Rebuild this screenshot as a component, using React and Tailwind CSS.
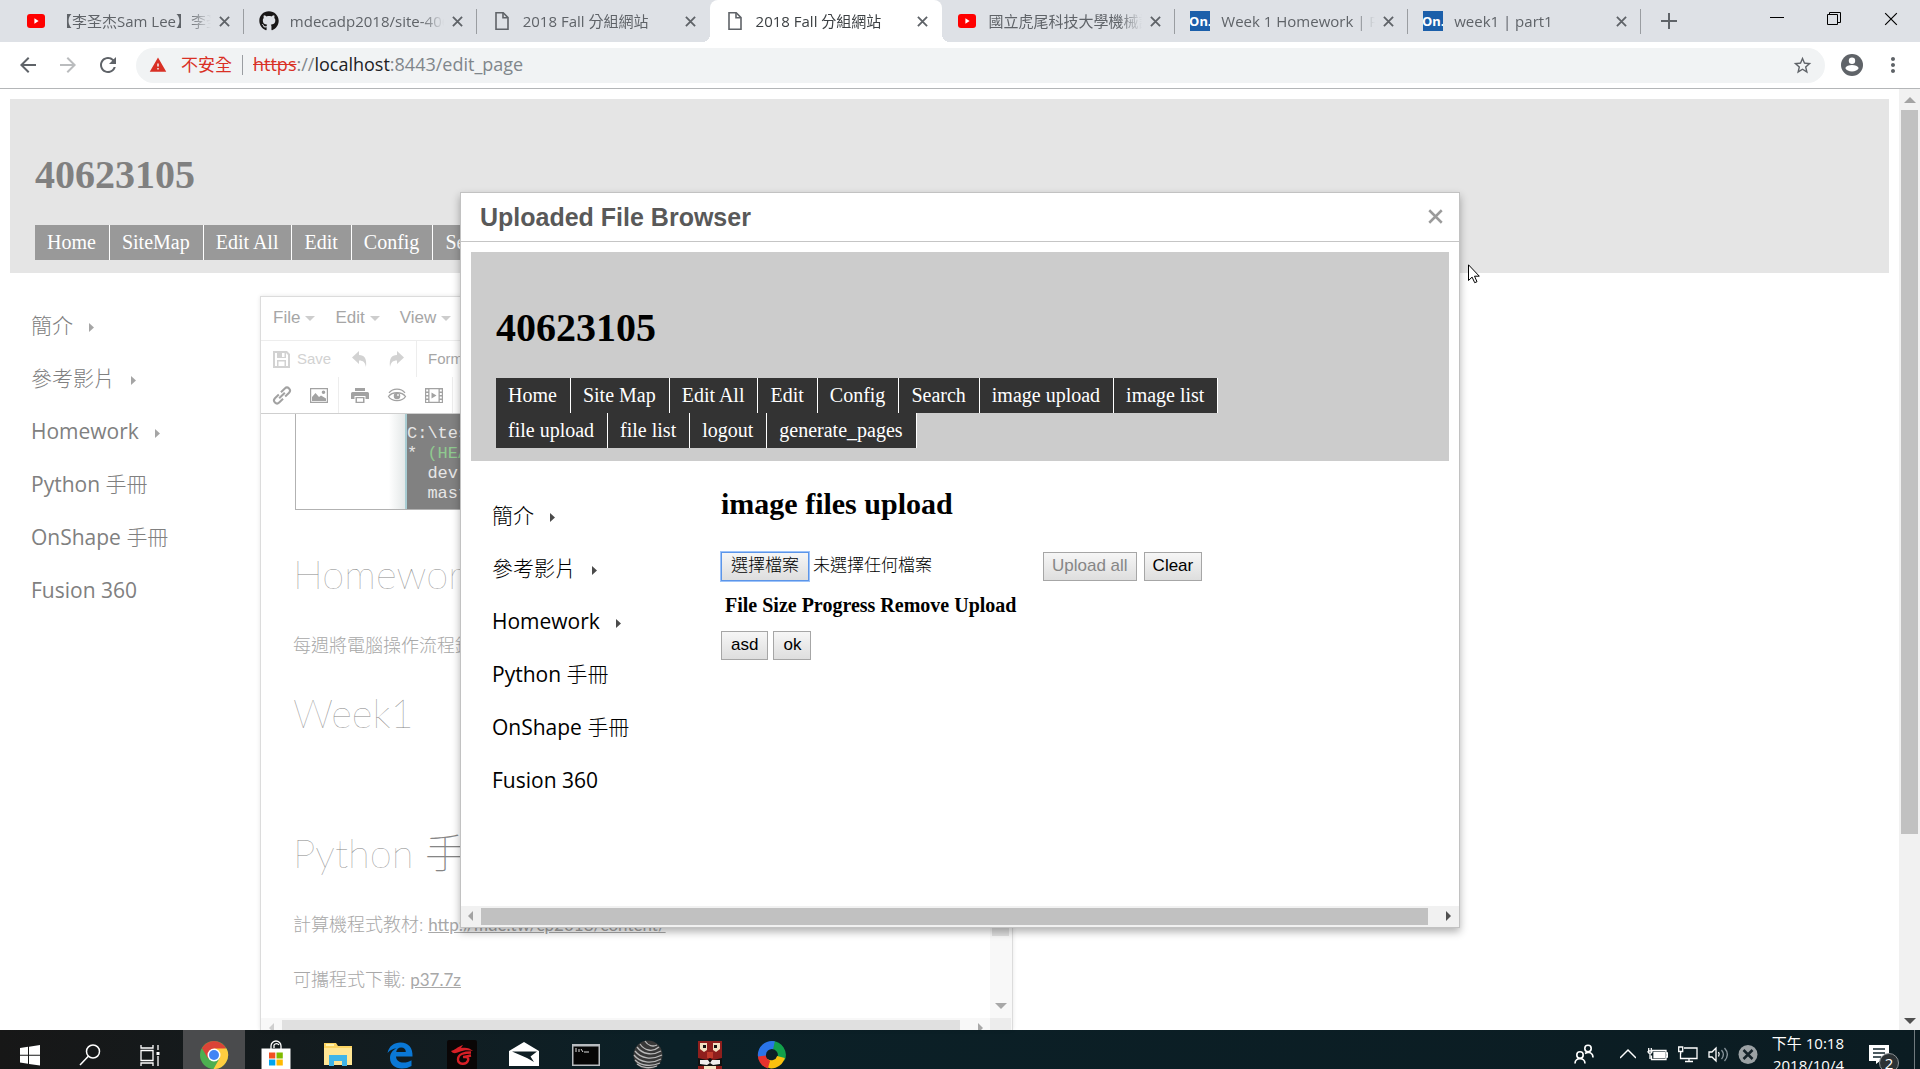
import React from "react";
import { FaGithub } from "react-icons/fa";
import {
  MdArrowBack,
  MdArrowForward,
  MdRefresh,
  MdWarning,
  MdStarBorder,
  MdMoreVert,
} from "react-icons/md";

const UI = "font-['Open_Sans','Noto_Sans_CJK_TC',sans-serif]";
const SERIF = "font-['Liberation_Serif','Noto_Sans_CJK_TC',serif]";
const ARIAL = "font-['Liberation_Sans','Noto_Sans_CJK_TC',sans-serif]";

/* ---------- browser chrome ---------- */

function YouTubeIcon() {
  return (
    <svg viewBox="0 0 20 20" className="size-5">
      <rect x="1" y="3" width="18" height="14" rx="3" fill="#f00" />
      <path d="M8.4 7.2v5.6l4.2-2.8z" fill="#fff" />
    </svg>
  );
}

function PageIcon() {
  return (
    <svg viewBox="0 0 20 20" className="size-5" fill="none" stroke="#5f6368" strokeWidth="1.6">
      <path d="M4 1.8h7.2L16 6.6v11.6H4z" />
      <path d="M11 2v4.800h4.800" />
    </svg>
  );
}

function OnshapeIcon() {
  return (
    <span className="flex size-5 items-center justify-center overflow-hidden bg-[#1b5faa] font-['Noto_Sans',sans-serif] text-[13px] leading-5 font-bold text-white">
      On.
    </span>
  );
}

const tabs = [
  { icon: "yt", title: "【李圣杰Sam Lee】李圣杰", line: true },
  { icon: "gh", title: "mdecadp2018/site-40623", line: true },
  { icon: "page", title: "2018 Fall 分組網站" },
  { icon: "page", title: "2018 Fall 分組網站", active: true },
  { icon: "yt", title: "國立虎尾科技大學機械設計", line: true },
  { icon: "on", title: "Week 1 Homework | Part", line: true },
  { icon: "on", title: "week1 | part1", line: true },
];

function TabIcon({ name }) {
  if (name === "yt") return <YouTubeIcon />;
  if (name === "gh") return <FaGithub className="size-5 text-[#191717]" />;
  if (name === "page") return <PageIcon />;
  return <OnshapeIcon />;
}

function CloseX({ className }) {
  return (
    <svg viewBox="0 0 12 12" className={className} stroke="currentColor" fill="none">
      <path d="M1 1l10 10M11 1L1 11" />
    </svg>
  );
}

function Tab({ tab }) {
  return (
    <div
      className={
        tab.active
          ? "relative flex h-[42px] min-w-0 flex-1 items-center rounded-t-[8px] bg-white pr-[14px] pl-[15px]"
          : "relative flex h-[42px] min-w-0 flex-1 items-center pr-[14px] pl-[15px]"
      }
    >
      {tab.active && (
        <>
          <span className="absolute bottom-0 -left-2 size-2 bg-[radial-gradient(circle_at_0_0,transparent_8px,white_8px)]" />
          <span className="absolute -right-2 bottom-0 size-2 bg-[radial-gradient(circle_at_100%_0,transparent_8px,white_8px)]" />
        </>
      )}
      <button type="button" className="flex min-w-0 flex-1 items-center gap-[11px] text-left">
        <span className="shrink-0">
          <TabIcon name={tab.icon} />
        </span>
        <span
          className={
            (tab.active ? "text-[#3c4043] " : "text-[#5f6368] ") +
            "min-w-0 flex-1 overflow-hidden text-[15px] leading-5 whitespace-nowrap [mask-image:linear-gradient(to_right,black_85%,transparent)]"
          }
        >
          {tab.title}
        </span>
      </button>
      <button type="button" aria-label="Close tab" className="ml-2 text-[#5f6368]">
        <CloseX className="size-[11px] stroke-2" />
      </button>
      {tab.line && <span className="absolute top-[9px] right-0 h-[25px] w-px bg-[#9a9da1]" />}
    </div>
  );
}

function TabStrip() {
  return (
    <div className={"flex h-[42px] shrink-0 bg-[#dee1e6] pl-[11px] " + UI}>
      <div className="flex min-w-0 flex-[0_1_1630px]">
        {tabs.map((t, i) => (
          <Tab key={i} tab={t} />
        ))}
      </div>
      <button type="button" aria-label="New tab" className="ml-5 text-[#5f6368]">
        <svg viewBox="0 0 16 16" className="size-4" stroke="currentColor" strokeWidth="2">
          <path d="M8 0v16M0 8h16" />
        </svg>
      </button>
      <div className="ml-auto flex items-start gap-[43px] pt-3 pr-[22px] text-black">
        <button type="button" aria-label="Minimize">
          <svg viewBox="0 0 14 14" className="size-[14px]" stroke="currentColor">
            <path d="M0 5.500h14" />
          </svg>
        </button>
        <button type="button" aria-label="Restore">
          <svg viewBox="0 0 14 14" className="size-[14px]" stroke="currentColor" fill="none">
            <path d="M.5 2.500h10v10h-10zM2.500 2.500v-2h11v10h-3" />
          </svg>
        </button>
        <button type="button" aria-label="Close">
          <CloseX className="size-[14px]" />
        </button>
      </div>
    </div>
  );
}

function Toolbar() {
  return (
    <div
      className={
        "flex h-[47px] shrink-0 items-center border-b border-[#b4b6b8] bg-white pr-[15px] pl-4 text-[#5f6368] " + UI
      }
    >
      <div className="flex items-center gap-4">
        <button type="button" aria-label="Back"><MdArrowBack className="size-6" /></button>
        <button type="button" aria-label="Forward" className="text-[#babcbe]"><MdArrowForward className="size-6" /></button>
        <button type="button" aria-label="Reload"><MdRefresh className="size-6" /></button>
      </div>
      <div className="ml-4 flex h-[35px] min-w-0 flex-1 items-center rounded-full bg-[#f1f3f4] pr-3 pl-[13px] leading-6">
        <MdWarning className="size-[18px] text-[#d93025]" />
        <span className="ml-[14px] text-[17px] text-[#d93025]">不安全</span>
        <span className="mx-[10px] h-5 w-px bg-[#9a9da1]" />
        <span className="flex-1 pb-[2px] text-[18px] whitespace-nowrap text-[#80868b]">
          <span className="text-[#d93025] line-through">https</span>://<span className="text-[#202124]">localhost</span>:8443/edit_page
        </span>
        <button type="button" aria-label="Bookmark"><MdStarBorder className="size-[21px]" /></button>
      </div>
      <button type="button" aria-label="Profile" className="ml-4">
        <svg viewBox="0 0 22 22" className="size-[22px]">
          <circle cx="11" cy="11" r="11" fill="#5f6368" />
          <circle cx="11" cy="6.800" r="3.200" fill="#fff" />
          <path d="M4.300 14c1.500-4 11.900-4 13.400 0-1.500 4.500-11.900 4.500-13.400 0z" fill="#fff" />
        </svg>
      </button>
      <button type="button" aria-label="Menu" className="ml-[18px]"><MdMoreVert className="size-6" /></button>
    </div>
  );
}

/* ---------- shared page pieces ---------- */

function Nav({ items, tone, className }) {
  return (
    <nav className={"flex flex-wrap " + className}>
      {items.map((label) => (
        <a
          key={label}
          href="#"
          className={"border-r border-white pr-[13px] pl-3 text-[20px] leading-[35px] whitespace-nowrap text-white " + tone}
        >
          {label}
        </a>
      ))}
    </nav>
  );
}

const side = [
  { han: "簡介", sub: true },
  { han: "參考影片", sub: true },
  { latin: "Homework", sub: true },
  { latin: "Python ", han: "手冊" },
  { latin: "OnShape ", han: "手冊" },
  { latin: "Fusion 360" },
];

function SideMenu({ className }) {
  return (
    <ul className={"text-[21px] leading-[53px] " + UI + " " + className}>
      {side.map(({ latin, han, sub }, i) => (
        <li key={i} className="h-[53px] whitespace-nowrap">
          <a href="#" className="inline-flex items-center gap-4">
            <span>
              {latin}
              {han && <span className="font-light">{han}</span>}
            </span>
            {sub && (
              <svg viewBox="0 0 5 9" className="mt-1 h-[9px] w-[5px] opacity-70" fill="currentColor">
                <path d="M0 0l5 4.500L0 9z" />
              </svg>
            )}
          </a>
        </li>
      ))}
    </ul>
  );
}

function Arrow({ dir, className }) {
  const d = {
    up: "M0 8L6 2l6 6z",
    down: "M0 4l6 6 6-6z",
    left: "M8 1L3 6l5 5z",
    right: "M4 1l5 5-5 5z",
  }[dir];
  return (
    <svg viewBox="0 0 12 12" className={"size-3 shrink-0 " + className} fill="currentColor">
      <path d={d} />
    </svg>
  );
}

/* ---------- editor ---------- */

function ToolIcon({ name }) {
  const shapes = {
    save: <path fillRule="evenodd" d="M0 0h14l3 3v14H0zM2 2v13h2V9h9v6h2V4l-2-2v5H4V2zM9 2h2.500v4H9zM5.500 10.500V15h6v-4.500z" />,
    undo: <path d="M8 0v4c5.500 0 8 3.500 7 12-1-4.500-2.500-6.500-7-6.500V13L1 6.500z" />,
    redo: <path d="M9 0v4C3.500 4 1 7.500 2 16c1-4.500 2.500-6.500 7-6.500V13l7-6.500z" />,
    link: (
      <g fill="none" stroke="currentColor" strokeWidth="2" transform="rotate(-45 9 8.500)">
        <path d="M7.500 5.500H2a3 3 0 0 0 0 6h5.500M10.500 5.500H16a3 3 0 0 1 0 6h-5.500M5 8.500h8" />
      </g>
    ),
    image: <path fillRule="evenodd" d="M0 1h18v15H0zM1.200 2.200v12.600h15.600V2.200zM2 14V10l3.500-4L9 10l2-1.500 5 3V14zM13.500 3.500a1.800 1.800 0 1 1 0 3.600 1.800 1.800 0 0 1 0-3.600z" />,
    print: <path fillRule="evenodd" d="M4 1h10v3H4zM1.500 5h15A1.500 1.500 0 0 1 18 6.500V12h-3.500V9h-11v3H0V6.500A1.500 1.500 0 0 1 1.500 5zM4.500 10h9v6h-9zM6 11.200v3.600h6v-3.600z" />,
    eye: (
      <g fill="none" stroke="currentColor" strokeWidth="1.300">
        <path d="M.5 9.500C4 4.500 14 4.500 17.500 9.500 14 15 4 15 .5 9.500z" />
        <path d="M1 5.800C5 1 13 1 17 5.800" />
        <circle cx="9" cy="9" r="2.600" fill="currentColor" />
        <circle cx="10" cy="8" r=".7" fill="#fff" stroke="#fff" strokeWidth=".5" />
      </g>
    ),
    film: <path fillRule="evenodd" d="M0 1h18v15H0zM1.200 2.500v2h2v-2zM1.200 6v2h2V6zM1.200 9.500v2h2v-2zM1.200 13v2h2v-2zM14.800 2.500v2h2v-2zM14.800 6v2h2V6zM14.800 9.500v2h2v-2zM14.800 13v2h2v-2zM4.500 2.200v12.600h9V2.200zM6.500 5.500l5 3-5 3z" />,
  };
  return (
    <svg viewBox="0 0 18 17" className="h-[17px] w-[18px] overflow-visible" fill="currentColor">
      {shapes[name]}
    </svg>
  );
}

function ToolButton({ name, label }) {
  return (
    <button type="button" aria-label={label} className="flex w-[37px] justify-center">
      <ToolIcon name={name} />
    </button>
  );
}

const thinHeading = "font-['Lato','Noto_Sans_CJK_TC',sans-serif] text-[40px] leading-[48px] font-thin text-[#858585]";

function Editor() {
  return (
    <section className="flex min-h-0 w-[753px] flex-col border border-b-0 border-[#dcdcdc] shadow-[0_0_4px_rgba(0,0,0,0.1)]">
      <div className={"flex h-[44px] shrink-0 items-center gap-5 border-b border-[#ededed] pb-px pl-3 text-[17px] leading-6 text-[#a6a6a6] " + ARIAL}>
        {["File", "Edit", "View"].map((m) => (
          <button type="button" key={m} className="flex items-center gap-[5px]">
            {m}
            <svg viewBox="0 0 10 5" className="mt-px h-[5px] w-[10px]" fill="#cdcdcd"><path d="M0 0h10L5 5z" /></svg>
          </button>
        ))}
      </div>
      <div className={"flex h-[36px] shrink-0 items-center text-[15px] leading-6 text-[#a6a6a6] " + ARIAL}>
        <div className="flex h-full w-[156px] items-center border-r border-[#ededed] pl-3 text-[#d2d2d2]">
          <button type="button" className="flex items-center gap-[6px]"><ToolIcon name="save" />Save</button>
          <span className="ml-[10px] flex">
            <ToolButton name="undo" label="Undo" />
            <ToolButton name="redo" label="Redo" />
          </span>
        </div>
        <button type="button" className="ml-[11px]">Formats</button>
      </div>
      <div className="flex h-[37px] shrink-0 items-center border-b border-[#cfcfcf] text-[#a2a2a2]">
        <div className="flex h-full items-center border-r border-[#ededed] pr-px pl-[2px]">
          <ToolButton name="link" label="Link" />
          <ToolButton name="image" label="Image" />
        </div>
        <div className="flex h-full items-center border-r border-[#ededed] pl-[2px]">
          <ToolButton name="print" label="Print" />
          <ToolButton name="eye" label="Preview" />
          <ToolButton name="film" label="Media" />
        </div>
      </div>
      <div className="flex min-h-0 flex-1 overflow-hidden text-[#a8a8a8]">
        <div className="flex min-w-0 flex-1 flex-col">
          <div className="min-h-0 flex-1 overflow-hidden pl-8 font-['Lato','Noto_Sans_CJK_TC',sans-serif] text-[18px] leading-[26px]">
            <div className="ml-[2px] flex h-[96px] w-[600px] border border-t-0 border-[#b2b2b2]">
              <div className="w-[109px] bg-linear-to-r from-white from-85% to-[#e4e8e8]" />
              <pre className="flex-1 border-l-2 border-[#a9cdd3] bg-[#818181] pt-[10px] font-['Liberation_Mono',monospace] text-[17px] leading-5 text-[#e6e6e6]">
                {"C:\\test>git branch\n* "}
                <span className="text-[#8fc98f]">(HEAD detached)</span>
                {"\n  dev\n  master"}
              </pre>
            </div>
            <h2 className={"mt-10 " + thinHeading}>Homework</h2>
            <p className="mt-[34px] font-light">每週將電腦操作流程錄影</p>
            <h2 className={"mt-[31px] " + thinHeading}>Week1</h2>
            <h2 className={"mt-[92px] " + thinHeading}>Python 手冊</h2>
            <p className="mt-[34px]"><span className="font-light">計算機程式教材: </span><a href="#" className="text-[17px] underline">http://mde.tw/cp2018/content/</a></p>
            <p className="mt-7"><span className="font-light">可攜程式下載: </span><a href="#" className="text-[17px] underline">p37.7z</a></p>
          </div>
          <div className="flex h-3 shrink-0 items-start overflow-hidden bg-[#f8f8f8] pt-[2px]">
            <Arrow dir="left" className="mt-[2px] mr-[4px] ml-[5px] text-[#cfcfcf]" />
            <div className="h-[17px] flex-1 bg-[#e0e0e0]" />
            <Arrow dir="right" className="mt-[2px] mr-[4px] ml-[14px] text-[#a8a8a8]" />
          </div>
        </div>
        <div className="flex w-[22px] shrink-0 flex-col items-center bg-[#f8f8f8] pr-px">
          <div className="mt-5 h-[502px] w-[17px] bg-[#e0e0e0]" />
          <Arrow dir="down" className="mt-auto mb-[7px] text-[#a8a8a8]" />
          <div className="h-3 w-full shrink-0 bg-[#ececec]" />
        </div>
      </div>
    </section>
  );
}

/* ---------- dialog ---------- */

const btn = "h-[29px] border bg-linear-to-b from-[#f6f6f6] to-[#dedede] text-[17px] leading-[26px] " + ARIAL;

function Dialog() {
  return (
    <div role="dialog" aria-label="Uploaded File Browser" className="flex w-full max-w-[1000px] flex-col border border-[#c2c2c2] bg-white shadow-[0_4px_8px_rgba(0,0,0,0.3)]">
      <header className={"flex h-[49px] items-center justify-between border-b border-[#c5c5c5] pr-4 pl-[19px] " + ARIAL}>
        <h1 className="text-[25px] leading-8 font-bold text-[#595959]">Uploaded File Browser</h1>
        <button type="button" aria-label="Close" className="text-[#9b9b9b]"><CloseX className="size-[15px] stroke-2" /></button>
      </header>
      <div className={"px-[10px] pt-[10px] text-black " + SERIF}>
        <div className="bg-[#ccc] px-[25px] pt-[53px] pb-[13px]">
          <h2 className="text-[40px] leading-[46px] font-bold">40623105</h2>
          <Nav
            className="mt-[27px] max-w-[740px]"
            tone="bg-[#333]"
            items={["Home", "Site Map", "Edit All", "Edit", "Config", "Search", "image upload", "image list", "file upload", "file list", "logout", "generate_pages"]}
          />
        </div>
        <div className="flex h-[445px]">
          <SideMenu className="w-[250px] pt-7 pl-[21px]" />
          <div>
            <h2 className="mt-[26px] text-[30px] leading-[34px] font-bold">image files upload</h2>
            <div className={"mt-[31px] flex items-center text-[17px] leading-[26px] " + ARIAL}>
              <input id="image-file" type="file" className="sr-only" />
              <label htmlFor="image-file" className="flex items-center gap-1 font-light">
                <span className={btn + " border-[#5c95e8] px-[9px] outline outline-[#9dc3fa]"}>選擇檔案</span>
                <span>未選擇任何檔案</span>
              </label>
              <button type="button" disabled className={btn + " ml-[111px] border-[#a6a6a6] px-2 text-[#868686]"}>Upload all</button>
              <button type="button" className={btn + " ml-[7px] border-[#a6a6a6] px-2"}>Clear</button>
            </div>
            <table className="mt-[10px] border-separate border-spacing-x-[3px] border-spacing-y-0 text-[20px] leading-[28px]">
              <thead>
                <tr>
                  {["File", "Size", "Progress", "Remove", "Upload"].map((h) => (
                    <th key={h} className="px-px">{h}</th>
                  ))}
                </tr>
              </thead>
            </table>
            <div className="mt-3 flex gap-[5px]">
              <button type="button" className={btn + " border-[#a6a6a6] px-[9px]"}>asd</button>
              <button type="button" className={btn + " border-[#a6a6a6] px-[9px]"}>ok</button>
            </div>
          </div>
        </div>
      </div>
      <div className="flex h-[21px] items-center bg-[#f1f1f1]">
        <Arrow dir="left" className="mx-[4px] text-[#a3a3a3]" />
        <div className="h-[17px] flex-1 bg-[#c1c1c1]" />
        <Arrow dir="right" className="mr-[5px] ml-[14px] text-[#505050]" />
      </div>
    </div>
  );
}

/* ---------- taskbar ---------- */

const appIcons = {
  start: <path fill="#fff" d="M5 8l8-1.200v8H5zM14 6.700L25 5v9.800H14zM5 15.800h8v8L5 22.600zM14 15.800h11V25.500l-11-1.600z" />,
  search: (
    <g fill="none" stroke="#fff" strokeWidth="1.500">
      <circle cx="18" cy="11.500" r="6.500" />
      <path d="M13.300 16.200L5 25" />
    </g>
  ),
  task: (
    <g fill="none" stroke="#fff" strokeWidth="1.300">
      <path d="M6 10.500h12v10H6zM6 5v3h12V5M6 26v-3h12v3M23 5v5M23 16v10" />
      <path d="M23 12v3" strokeWidth="3" />
    </g>
  ),
  chrome: (
    <g>
      <circle cx="15" cy="15" r="14" fill="#4caf50" />
      <path d="M15 15L2.900 8A14 14 0 0 1 27.100 8z" fill="#db4437" />
      <path d="M2.900 8L9 18.500 15 9z" fill="#db4437" />
      <path d="M15 8.500h12.500A14 14 0 0 1 14.500 29L20.500 18.500z" fill="#ffcd40" />
      <circle cx="15" cy="15" r="6.500" fill="#fff" />
      <circle cx="15" cy="15" r="5" fill="#4285f4" />
    </g>
  ),
  store: (
    <g>
      <path d="M10 9V6a5 5 0 0 1 10 0v3M13 8V5a3 3 0 0 1 5 0" fill="none" stroke="#fff" strokeWidth="1.300" />
      <path d="M.5 8.500h29V30h-29z" fill="#fff" />
      <path d="M8 12.500h6.300v6H8z" fill="#f25022" />
      <path d="M15.500 12.500h6.300v6h-6.300z" fill="#7fba00" />
      <path d="M8 19.500h6.300v6H8z" fill="#00a4ef" />
      <path d="M15.500 19.500h6.300v6h-6.300z" fill="#ffb900" />
    </g>
  ),
  folder: (
    <g>
      <path d="M1 3h12l2 3h14v19H1z" fill="#fcd462" />
      <path d="M3 4h8v2H3z" fill="#fff3b0" />
      <path d="M1 8h28v17H1z" fill="#ffe694" />
      <path d="M6 26V15h18v11h-5v-5h-8v5z" fill="#3fb5e8" />
    </g>
  ),
  edge: (
    <path
      fill="#0a78d6"
      d="M2.500 13C4 6 9 2.500 15.500 2.500c8 0 12.500 5.500 12 14H11c.3 4 3.500 6 7.500 6 3 0 5.500-.8 8-2.300V26c-3 1.700-6 2.500-9.500 2.500C9.500 28.500 5 24 5 18c0-4.500 2.500-8 6.500-9.800C8 8.700 5 10 2.500 13zM11.200 12h9.600c0-3-1.700-4.500-4.600-4.500s-4.600 1.800-5 4.500z"
    />
  ),
  garena: (
    <g>
      <rect width="30" height="30" rx="2" fill="#0a0606" />
      <path fill="#d81f26" d="M4 11c4-1 6-4 12-6l-2 3c5-1 9 0 12 3-5-1-9-1-14 1-3 1.500-6 2-8-1z" />
      <path fill="none" stroke="#d81f26" strokeWidth="2.400" d="M24 12.500c-6 0-13 1-13 7 0 5 8 6 10 1 1-3-1-4-5-3.500M17 17l7-1.500" />
    </g>
  ),
  mail: <path fill="#fff" d="M0 11L15 2l15 9v15H0zM3 11.500L18 18l7 4-3.500-5.500L28 11.500z" fillRule="evenodd" />,
  cmd: (
    <g>
      <path d="M1 4h28v22H1z" fill="#b8bcc0" />
      <path d="M2.500 6.500h25V24.500h-25z" fill="#060606" />
      <path d="M4 9h2M4 11h2M8 9v3M10 9l2 3M13 12h5" stroke="#ddd" strokeWidth="1" />
    </g>
  ),
  sphere: (
    <g>
      <circle cx="15" cy="15" r="14.500" fill="#383838" />
      <g fill="none" stroke="#b9b9b9" strokeWidth="1.300">
        <path d="M7 4c4 6 12 9 19 3M4 7c5 7 15 9 24 4M2 11c6 8 17 9 27 4M1 15c6 8 18 9 27 4M2 20c6 6 16 7 25 3M4 24c5 4 13 5 20 2M12 1c3 5 8 6 12 4" />
      </g>
    </g>
  ),
  tiger: (
    <g>
      <path d="M3 1h24v29H3z" fill="#8f1f1d" />
      <path d="M5 3h7v7l-3 2-4-3zM18 3h7v6l-4 3-3-2z" fill="#f0dfc0" />
      <path d="M8 5h3v3H8zM19 5h3v3h-3z" fill="#111" />
      <path d="M12 12h6v6h-6z" fill="#c0392b" />
      <path d="M3 18l9 2 3-2 3 2 9-2v8H3z" fill="#111" />
      <path d="M5 20h8l2 3 2-3h8v4l-7 1-3-2-3 2-7-1z" fill="#eee" />
      <path d="M9 26h12v4H9z" fill="#f3e6c8" />
    </g>
  ),
  ring: (
    <g fill="none" strokeWidth="8">
      <path d="M15 5a10 10 0 0 1 9 14" stroke="#12a04b" />
      <path d="M24 17a10 10 0 0 1-16 5" stroke="#fbc10e" />
      <path d="M12 24.600A10 10 0 0 1 5 13" stroke="#e5322d" />
      <path d="M5 16A10 10 0 0 1 17 5.200" stroke="#2a74e8" />
    </g>
  ),
};

const systemApps = ["start", "search", "task"];
const pinnedApps = ["chrome", "store", "folder", "edge", "garena", "mail", "cmd", "sphere", "tiger", "ring"];

function AppButton({ name, className }) {
  return (
    <button type="button" aria-label={name} className={"flex h-[50px] justify-center pt-[10px] " + className}>
      <svg viewBox="0 0 30 30" className="size-[30px]">{appIcons[name]}</svg>
    </button>
  );
}

function Taskbar() {
  return (
    <footer className={"flex h-[39px] shrink-0 items-start overflow-hidden bg-linear-to-r from-[#171717] via-[#0b2027] via-35% to-[#0b1c22] " + UI}>
      <div className="flex w-[183px]">
        {systemApps.map((a) => (
          <AppButton key={a} name={a} className="w-[60px]" />
        ))}
      </div>
      <div className="flex">
        {pinnedApps.map((a) => (
          <AppButton key={a} name={a} className={a === "chrome" ? "w-[62px] bg-[#4a4b4d]" : "w-[62px]"} />
        ))}
      </div>
      <div className="ml-auto flex items-start pt-[14px] text-white">
        <svg viewBox="0 0 20 20" className="mr-[26px] h-5 w-5" fill="none" stroke="#fff" strokeWidth="1.600">
          <circle cx="6" cy="11" r="3.200" />
          <path d="M1 19.500c0-6.500 10-6.500 10 0" />
          <circle cx="14" cy="4.500" r="3.200" />
          <path d="M11 9.500c4-2.500 8-.5 8 4" />
        </svg>
        <svg viewBox="0 0 16 20" className="mr-[11px] h-5 w-4" fill="none" stroke="#fff" strokeWidth="1.500">
          <path d="M0 14l8-8 8 8" />
        </svg>
        <svg viewBox="0 0 21 20" className="mr-[10px] h-5 w-[21px]" fill="none" stroke="#fff" strokeWidth="1.300">
          <path d="M5 6.500h14v9H4.500v-4M19 9h1.500v4H19M1 7h4M1.700 4v3M4.300 4v3M1 7c0 3 4 3 4 0M3 9v6" />
          <path d="M7 8.500h10.500v5H7z" fill="#fff" />
        </svg>
        <svg viewBox="0 0 20 20" className="mr-[10px] h-5 w-5" fill="none" stroke="#fff" strokeWidth="1.300">
          <path d="M6 4h13v10.500H2.500V9M7 17.500h8M11 14.500v3M.7 3h4v4.500h-4zM2.700 7.500V10" />
        </svg>
        <svg viewBox="0 0 20 20" className="mr-[10px] h-5 w-5" fill="none" stroke="#fff" strokeWidth="1.300">
          <path d="M1 8h3l4-4v13l-4-4H1z" />
          <path d="M10.500 8c1 1.500 1 3 0 4.500" />
          <path d="M13.500 6c2.500 3 2.500 6 0 9M16.500 4c3.500 4 3.500 9 0 13" stroke="#87939a" />
        </svg>
        <svg viewBox="0 0 20 20" className="mr-[14px] h-5 w-5">
          <circle cx="10" cy="10.500" r="9.500" fill="#9ba1a4" />
          <path d="M5.500 6l9 9M14.500 6l-9 9" stroke="#16232a" strokeWidth="2.500" />
        </svg>
        <div className="-mt-[12px] mr-[25px] text-right text-[15px] leading-[22px] whitespace-nowrap">
          <div>下午 10:18</div>
          <div>2018/10/4</div>
        </div>
        <div className="relative mr-[25px] h-5 w-5">
          <svg viewBox="0 0 20 20" className="h-5 w-5">
            <path d="M0 1h20v16H11l-4 3v-3H0z" fill="#fff" />
            <path d="M4 5h12M4 9h12M4 13h8" stroke="#12252d" strokeWidth="1.300" />
          </svg>
          <span className="absolute top-[9px] left-[10px] flex size-5 items-center justify-center rounded-full border border-[#8d9295] bg-[#2c3235] text-[15px] leading-5">2</span>
        </div>
        <span className="-mt-[14px] mr-[5px] h-[39px] w-px bg-[#707a7e]" />
      </div>
    </footer>
  );
}

/* ---------- page ---------- */

export default function App() {
  return (
    <div className="flex h-screen flex-col overflow-hidden bg-white">
      <TabStrip />
      <Toolbar />
      <main className="relative flex min-h-0 flex-1">
        <div className={"flex min-w-0 flex-1 flex-col px-[10px] pt-[10px] " + SERIF}>
          <div className="shrink-0 bg-[#e5e5e5] px-[25px] pt-[53px] pb-[13px]">
            <h1 className="text-[40px] leading-[46px] font-bold text-[#808080]">40623105</h1>
            <Nav className="mt-[27px] max-w-[1000px]" tone="bg-[#999]" items={["Home", "SiteMap", "Edit All", "Edit", "Config", "Search"]} />
          </div>
          <div className="flex min-h-0 flex-1">
            <SideMenu className="w-[250px] shrink-0 pt-[26px] pl-[21px] text-[#808080]" />
            <div className="flex min-h-0 pt-[23px]">
              <Editor />
            </div>
          </div>
        </div>
        <div className="flex w-[21px] shrink-0 flex-col items-center bg-[#f1f1f1]">
          <Arrow dir="up" className="mt-[6px] text-[#a3a3a3]" />
          <div className="mt-[3px] h-[724px] w-[17px] bg-[#c1c1c1]" />
          <Arrow dir="down" className="mt-auto mb-1 text-[#505050]" />
        </div>
        <div className="absolute inset-0 flex items-center justify-center">
          <Dialog />
        </div>
        <svg viewBox="0 0 12 20" className="absolute top-[175px] left-[calc(50%+508px)] h-5 w-3" fill="#fff" stroke="#000">
          <path d="M.5.8v15.700l3.600-3.400 2.600 5.600 2.300-1-2.500-5.500h4.800z" />
        </svg>
      </main>
      <Taskbar />
    </div>
  );
}
